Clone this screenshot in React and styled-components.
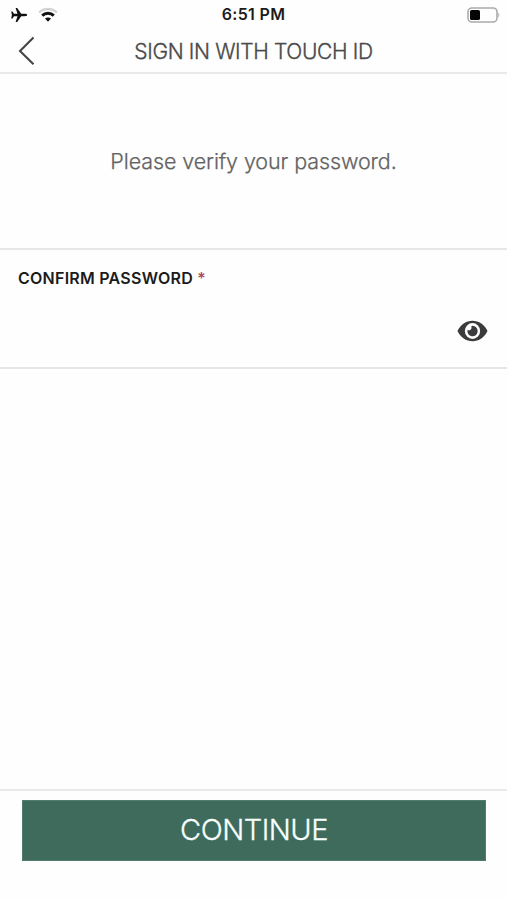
import React from 'react';
import styled, { createGlobalStyle } from 'styled-components';

const GlobalStyle = createGlobalStyle`
  * {
    box-sizing: border-box;
  }

  body {
    margin: 0;
    background-color: #fefefe;
    font-family: Inter, "Liberation Sans", sans-serif;
  }
`;

const Screen = styled.div`
  width: 100%;
  height: 900px;

  display: flex;
  flex-direction: column;
  overflow: hidden;
`;

const StatusBar = styled.div`
  height: 29px;
  padding: 0 7px 0 10px;

  display: grid;
  grid-template-columns: 1fr auto 1fr;
  align-items: center;
`;

const StatusGroup = styled.div`
  display: flex;
  align-items: center;
  justify-content: ${props => (props.$end ? 'flex-end' : 'flex-start')};
  gap: 10px;

  svg {
    display: block;
  }
`;

const Clock = styled.time`
  margin-right: 3px;

  color: #1c1c1c;
  font-size: 16px;
  font-weight: 600;
  line-height: 29px;
  letter-spacing: 0.3px;
`;

const Header = styled.header`
  height: 45px;
  border-bottom: 2px solid #e9e9e9;

  display: grid;
  grid-template-columns: 54px 1fr 54px;
  align-items: center;
`;

const BackButton = styled.button`
  height: 43px;
  padding: 0 0 0 17px;
  border: 0;
  background: none;

  svg {
    display: block;
  }
`;

const Title = styled.h1`
  margin: 0;
  padding-top: 1px;

  color: #4a4a4a;
  font-size: 21px;
  font-weight: 300;
  line-height: 43px;
  letter-spacing: -0.35px;
  text-align: center;
  white-space: nowrap;
  -webkit-text-stroke: 0.35px currentColor;
`;

const Message = styled.p`
  height: 174px;
  margin: 0;

  color: #636363;
  font-size: 21.5px;
  font-weight: 300;
  line-height: 174px;
  letter-spacing: -0.1px;
  text-align: center;
  -webkit-text-stroke: 0.25px currentColor;
`;

const Field = styled.section`
  height: 121px;
  padding: 18px 18px 0;
  border-top: 2px solid #e7e7e7;
  border-bottom: 2px solid #e7e7e7;
`;

const Label = styled.label`
  display: block;

  color: #1b1b1b;
  font-size: 16px;
  font-weight: 600;
  line-height: 20px;
  letter-spacing: 0.25px;
`;

const Required = styled.span`
  color: #a8465c;
  font-weight: 500;
`;

const InputRow = styled.div`
  height: 66px;
  margin-top: 10px;

  display: flex;
  align-items: center;
`;

const PasswordInput = styled.input`
  flex: 1;
  min-width: 0;
  height: 44px;
  padding: 0;
  border: 0;
  outline: 0;
  background: none;
  font: inherit;
  font-size: 20px;
`;

const RevealButton = styled.button`
  margin-right: 1px;
  padding: 0;
  border: 0;
  background: none;

  svg {
    display: block;
  }
`;

const Footer = styled.footer`
  height: 111px;
  margin-top: auto;
  padding: 9px 21px 0 22px;
  border-top: 2px solid #e9e9e9;
`;

const ContinueButton = styled.button`
  width: 100%;
  height: 61px;
  padding: 0 0 1px;
  border: 1px solid #527c6e;

  color: #f7fffc;
  background-color: #3f6b5d;
  font-family: inherit;
  font-size: 29px;
  font-weight: 300;
  line-height: 58px;
  letter-spacing: -0.5px;
  -webkit-text-stroke: 0.3px currentColor;
`;

const AirplaneIcon = () => (
  <svg width="18" height="16" viewBox="0 0 18 16" fill="#111">
    <path d="M17.2 8c0-.8-1.2-1.2-2.4-1.2h-3.6L7.2 1H5.6l1.9 5.8H4L2.5 4.6H1.2L1.9 8l-.7 3.4h1.3L4 9.2h3.5L5.6 15h1.6l4-5.8h3.6c1.2 0 2.4-.4 2.4-1.2z" />
  </svg>
);

const WifiIcon = () => (
  <svg width="20" height="16" viewBox="0 0 20 16" fill="none">
    <path d="M1.2 5.5C6 .9 14 .9 18.8 5.5" stroke="#d2d2d2" strokeWidth="2.4" />
    <path d="M4.2 8.6c3.2-3.1 8.4-3.1 11.6 0" stroke="#111" strokeWidth="3" />
    <path d="M7 11.6c1.8-1.6 4.2-1.6 6 0L10 14.7z" fill="#111" />
  </svg>
);

const BatteryIcon = () => (
  <svg width="33" height="16" viewBox="0 0 33 16">
    <rect x="1" y="1" width="29" height="14" rx="4" fill="none" stroke="#aaa" strokeWidth="1.6" />
    <rect x="3" y="3" width="10" height="10" rx="1.6" fill="#050505" />
    <path d="M31.3 5.7c1.3.5 1.3 4.1 0 4.6z" fill="#aaa" />
  </svg>
);

const BackIcon = () => (
  <svg width="20" height="30" viewBox="0 0 20 30">
    <path d="M16.5 1.5L3 15l13.5 13.3" fill="none" stroke="#444" strokeWidth="2.1" />
  </svg>
);

const EyeIcon = () => (
  <svg width="31" height="22" viewBox="0 0 32 22" preserveAspectRatio="none">
    <path d="M.5 11C3.6 4.5 9.3.7 16 .7S28.4 4.5 31.5 11C28.4 17.5 22.7 21.3 16 21.3S3.6 17.5.5 11z" fill="#3b3b3d" />
    <circle cx="16" cy="11" r="7.9" fill="#fefefe" />
    <path d="M16 5.7a5.3 5.3 0 1 1-5.1 4c2.3 1.5 5-.6 3.9-3.2.2-.5.7-.8 1.2-.8z" fill="#3b3b3d" />
  </svg>
);

export default function App() {
  return (
    <Screen>
      <GlobalStyle />
      <StatusBar>
        <StatusGroup>
          <AirplaneIcon />
          <WifiIcon />
        </StatusGroup>
        <Clock>6:51 PM</Clock>
        <StatusGroup $end>
          <BatteryIcon />
        </StatusGroup>
      </StatusBar>
      <Header>
        <BackButton aria-label="Back">
          <BackIcon />
        </BackButton>
        <Title>SIGN IN WITH TOUCH ID</Title>
      </Header>
      <Message>Please verify your password.</Message>
      <Field>
        <Label htmlFor="password">
          CONFIRM PASSWORD <Required>*</Required>
        </Label>
        <InputRow>
          <PasswordInput id="password" type="password" />
          <RevealButton aria-label="Show password">
            <EyeIcon />
          </RevealButton>
        </InputRow>
      </Field>
      <Footer>
        <ContinueButton>CONTINUE</ContinueButton>
      </Footer>
    </Screen>
  );
}
